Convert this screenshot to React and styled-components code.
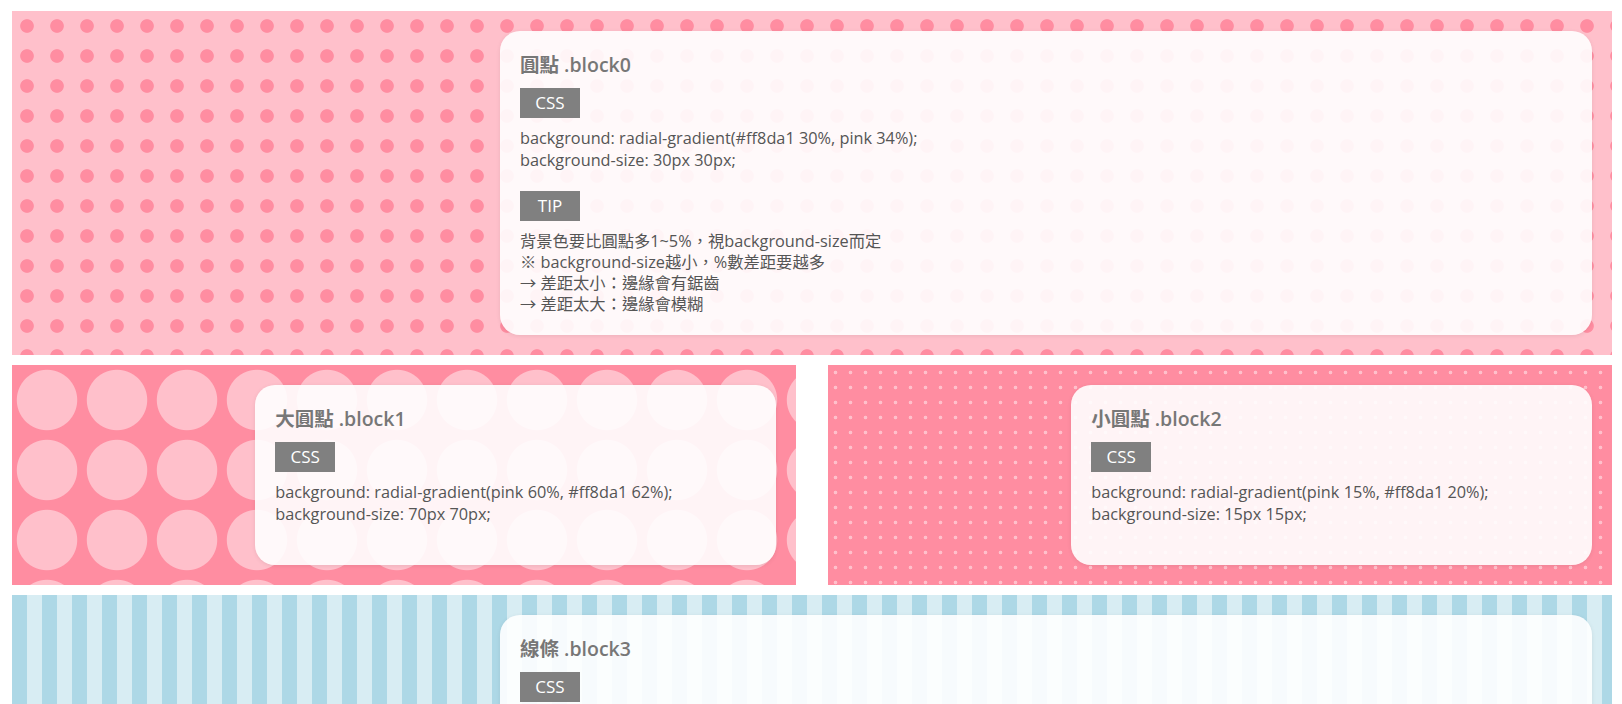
import React from "react";
import styled, { createGlobalStyle } from "styled-components";

const GlobalStyle = createGlobalStyle`
  body {
    margin: 0;
    background: #fff;
    font-family: "Open Sans", "Noto Sans CJK TC", sans-serif;
  }
  * { box-sizing: border-box; }
`;

const Page = styled.div`
  padding: 11px 10px 0 12px;
`;

const Row = styled.div`
  display: flex;
  justify-content: space-between;
`;

const patterns = {
  dots: `
    background: radial-gradient(#ff8da1 30%, pink 34%);
    background-size: 30px 30px;
  `,
  bigDots: `
    background: radial-gradient(pink 60%, #ff8da1 62%);
    background-size: 70px 70px;
  `,
  smallDots: `
    background: radial-gradient(pink 15%, #ff8da1 20%);
    background-size: 15px 15px;
  `,
  stripes: `
    background: linear-gradient(90deg, lightblue 50%, #d8edf3 50%);
    background-size: 30px 30px;
  `,
};

const Block = styled.section`
  width: ${(p) => (p.$half ? "49%" : "100%")};
  padding: 20px;
  margin-bottom: 10px;
  ${(p) => patterns[p.$pattern]}
`;

const Card = styled.div`
  margin-left: 30%;
  padding: 20px;
  border-radius: 20px;
  background: rgba(255, 255, 255, 0.9);
  box-shadow: 0 1px 4px rgba(0, 0, 0, 0.08);
  color: #555;
`;

const Title = styled.h3`
  margin: 0;
  font-size: 19.5px;
  line-height: 28px;
  font-weight: 600;
  color: #777;
`;

const Tag = styled.div`
  width: 60px;
  height: 30px;
  margin-top: 9px;
  background: gray;
  color: #fff;
  font-size: 17px;
  line-height: 30px;
  text-align: center;
`;

const Code = styled.p`
  margin: 10px 0 20px;
  font-size: 16.3px;
  line-height: 21.5px;
`;

const Tip = styled.p`
  margin: 10px 0 0;
  font-size: 16.3px;
  line-height: 21px;
`;

const Lines = ({ lines }) =>
  lines.map((l, i) => (
    <React.Fragment key={i}>
      {l}
      {i < lines.length - 1 && <br />}
    </React.Fragment>
  ));

export default function App() {
  return (
    <Page>
      <GlobalStyle />
      <Block $pattern="dots">
        <Card>
          <Title>圓點 .block0</Title>
          <Tag>CSS</Tag>
          <Code>
            <Lines
              lines={[
                "background: radial-gradient(#ff8da1 30%, pink 34%);",
                "background-size: 30px 30px;",
              ]}
            />
          </Code>
          <Tag>TIP</Tag>
          <Tip>
            <Lines
              lines={[
                "背景色要比圓點多1~5%，視background-size而定",
                "※ background-size越小，%數差距要越多",
                "→ 差距太小：邊緣會有鋸齒",
                "→ 差距太大：邊緣會模糊",
              ]}
            />
          </Tip>
        </Card>
      </Block>

      <Row>
        <Block $half $pattern="bigDots">
          <Card>
            <Title>大圓點 .block1</Title>
            <Tag>CSS</Tag>
            <Code>
              <Lines
                lines={[
                  "background: radial-gradient(pink 60%, #ff8da1 62%);",
                  "background-size: 70px 70px;",
                ]}
              />
            </Code>
          </Card>
        </Block>
        <Block $half $pattern="smallDots">
          <Card>
            <Title>小圓點 .block2</Title>
            <Tag>CSS</Tag>
            <Code>
              <Lines
                lines={[
                  "background: radial-gradient(pink 15%, #ff8da1 20%);",
                  "background-size: 15px 15px;",
                ]}
              />
            </Code>
          </Card>
        </Block>
      </Row>

      <Block $pattern="stripes">
        <Card>
          <Title>線條 .block3</Title>
          <Tag>CSS</Tag>
          <Code>
            <Lines
              lines={[
                "background: linear-gradient(90deg, lightblue 50%, #d8edf3 50%);",
                "background-size: 30px 30px;",
              ]}
            />
          </Code>
        </Card>
      </Block>
    </Page>
  );
}
